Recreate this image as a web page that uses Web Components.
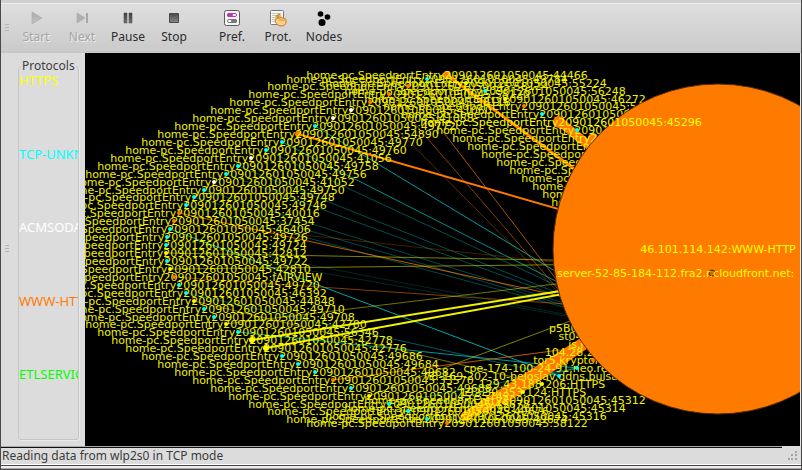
<!DOCTYPE html>
<html lang="en">
<head>
<meta charset="utf-8">
<title>Network monitor</title>
<style>
html, body { height: 100%; margin: 0; }
body { background: #dcdcdc; }
</style>
</head>
<body>
<monitor-window>
  <tool-bar slot="tools">
    <tool-button label="Start" disabled><svg width="18" height="18" viewBox="0 0 18 18"><defs><linearGradient id="a" x2="0" y2="1"><stop stop-color="#aaa"/><stop offset="1" stop-color="#c6c6c6"/></linearGradient></defs><path d="M5 3L15 9 5 15Z" fill="url(#a)" stroke="#a8a8a8" stroke-width=".6"/></svg></tool-button>
    <tool-button label="Next" disabled><svg width="18" height="18" viewBox="0 0 18 18"><path d="M4 4L12 9 4 14Z" fill="#b0b0b0" stroke="#a8a8a8" stroke-width=".6"/><path d="M13 4h2v10h-2z" fill="#a8a8a8"/></svg></tool-button>
    <tool-button label="Pause"><svg width="18" height="18" viewBox="0 0 18 18"><defs><linearGradient id="b" x2="0" y2="1"><stop stop-color="#3c3c3c"/><stop offset="1" stop-color="#777"/></linearGradient></defs><path d="M5 4h3v10H5zM10 4h3v10h-3z" fill="url(#b)" stroke="#444" stroke-width=".5"/></svg></tool-button>
    <tool-button label="Stop"><svg width="18" height="18" viewBox="0 0 18 18"><defs><linearGradient id="c" x2="0" y2="1"><stop stop-color="#4a4a4a"/><stop offset="1" stop-color="#888"/></linearGradient></defs><path d="M4.500 4.500h9v9h-9z" fill="url(#c)" stroke="#4a4a4a"/></svg></tool-button>
    <tool-button class="group" label="Pref."><svg width="18" height="18" viewBox="0 0 18 18"><rect x="1.500" y="1.500" width="15" height="15" rx="2" fill="#f3f3f3" stroke="#5c5c5c"/><rect x="4.500" y="4.500" width="9" height="3" rx="1.500" fill="#fff" stroke="#b53cab"/><rect x="4" y="4" width="6" height="4" rx="2" fill="#b53cab"/><rect x="4.500" y="10.500" width="9" height="3" rx="1.500" fill="#fff" stroke="#777"/><rect x="8" y="10" width="6" height="4" rx="2" fill="#777"/></svg></tool-button>
    <tool-button label="Prot."><svg width="18" height="18" viewBox="0 0 18 18"><rect x="1.500" y="1.500" width="13" height="14" rx="1" fill="#f6f6f6" stroke="#777"/><path d="M3 4.500h9M3 6.500h4M3 8.500h3M3 10.500h3M3 12.500h4" stroke="#c4c8ba"/><path d="M7 11V7.500c0-1.500 2-1.500 2 0V10 6c0-1.500 2-1.500 2 0v3c.5-1 2-.8 2 .3.700-.9 2-.5 2 .6.700-.7 2-.2 2 1V13c0 2.500-2 4-5 4-3 0-4-1.500-5.500-4C6 12 5.500 11 7 11Z" fill="#fbd08b" stroke="#c77b12"/><path d="M11 9v3M13 10v2M15 10.500V12" stroke="#c77b12" stroke-width=".8"/></svg></tool-button>
    <tool-button label="Nodes"><svg width="18" height="18" viewBox="0 0 18 18"><path d="M5 5l8 3-5 6" fill="none" stroke="#555" stroke-width=".7" stroke-dasharray="1 1"/><circle cx="5.500" cy="5" r="2.800"/><circle cx="12.500" cy="8" r="2.800"/><circle cx="7" cy="13.500" r="3.500"/></svg></tool-button>
  </tool-bar>
  <protocol-panel slot="side" heading="Protocols">
    <protocol-name style="color:#ff0">HTTPS</protocol-name>
    <protocol-name style="color:#0ff">TCP-UNKNOWN</protocol-name>
    <protocol-name style="color:#fff">ACMSODA</protocol-name>
    <protocol-name style="color:#ff7b00">WWW-HTTP</protocol-name>
    <protocol-name style="color:#0f0">ETLSERVICEMGR</protocol-name>
  </protocol-panel>
  <node-graph slot="main"></node-graph>
  <status-bar slot="status">Reading data from wlp2s0 in TCP mode</status-bar>
</monitor-window>

<script>
class Base extends HTMLElement {
  render(html) {
    this.attachShadow({ mode: 'open' }).innerHTML = html;
  }
}

customElements.define('monitor-window', class extends Base {
  connectedCallback() {
    this.render(`<style>
      :host { display: flex; flex-direction: column; box-sizing: border-box; min-height: 100vh;
        border: solid #4a4848; border-width: 0 1px 1px; background: #dcdcdc; color: #3c3c3c;
        font: 12px/18px "Noto Sans", "Open Sans", sans-serif; }
      .top { height: 3px; background: #cfcfcf; border-bottom: 1px solid #eee; }
      .body { flex: 1; display: flex; min-height: 0; }
      .base { height: 2px; border-top: 1px solid #4a4848; background: #eee; border-bottom: 1px solid #aaa; }
    </style>
    <div class="top"></div>
    <slot name="tools"></slot>
    <div class="body"><slot name="side"></slot><slot name="main"></slot></div>
    <slot name="status"></slot>
    <div class="base"></div>`);
  }
});

customElements.define('tool-bar', class extends Base {
  connectedCallback() {
    this.render(`<style>
      :host { display: flex; align-items: center; box-sizing: border-box; height: 49px;
        background: linear-gradient(#dedede, #cbcbcb); border-bottom: 2px solid #c7c7c7; }
      .grip { width: 4px; height: 7px; margin: 0 4px; background: repeating-linear-gradient(#b4b4b4 0 1px, transparent 1px 3px); }
      ::slotted(.group) { margin-left: 12px; }
    </style><div class="grip"></div><slot></slot>`);
  }
});

customElements.define('tool-button', class extends Base {
  connectedCallback() {
    const off = this.hasAttribute('disabled');
    this.render(`<style>
      :host { display: block; width: 46px; }
      button { display: flex; flex-direction: column; align-items: center; gap: 1px; width: 100%;
        padding: 0; border: 0; background: none; font: inherit; color: #2c2c2c; }
      button:disabled { color: #a6a6a6; text-shadow: 1px 1px #eee; }
    </style><button type="button"${off ? ' disabled' : ''}><slot></slot><span>${this.getAttribute('label')}</span></button>`);
  }
});

customElements.define('protocol-panel', class extends Base {
  connectedCallback() {
    this.render(`<style>
      :host { display: flex; align-items: stretch; flex: 0 0 84px; box-sizing: border-box; padding: 4px 6px 6px 0; }
      .grip { align-self: center; width: 4px; height: 7px; margin: 0 9px 0 4px; background: repeating-linear-gradient(#b4b4b4 0 1px, transparent 1px 3px); }
      fieldset { flex: 1; min-width: 0; margin: 0; padding: 0; border: 1px solid #c6c6c6; border-radius: 3px;
        box-shadow: 1px 1px #e9e9e9; }
      legend { margin-left: 2px; padding: 0 1px; line-height: 18px; }
      .rows { display: grid; grid-auto-rows: 1fr; height: calc(100% + 4px); margin-top: -4px; overflow: hidden; font-size: 13px; }
    </style><div class="grip"></div>
    <fieldset><legend>${this.getAttribute('heading')}</legend><div class="rows"><slot></slot></div></fieldset>`);
  }
});

customElements.define('protocol-name', class extends Base {
  connectedCallback() {
    this.render(`<style>:host { display: block; overflow: hidden; white-space: nowrap; }</style><slot></slot>`);
  }
});

customElements.define('status-bar', class extends Base {
  connectedCallback() {
    this.render(`<style>
      :host { display: flex; align-items: flex-end; justify-content: space-between; box-sizing: border-box; height: 19px;
        border-bottom: 1px solid #fff; }
      .text { flex: 1; border-top: 1px solid #aaa; box-shadow: inset 0 1px #111; padding-left: 1px; line-height: 17px; }
      svg { margin: 0 2px 2px 5px; }
    </style><div class="text"><slot></slot></div>
    <svg width="12" height="12"><path d="M8 1h2v2H8zM4 4h2v2H4zM8 4h2v2H8zM1 8h2v2H1zM4 8h2v2H4zM8 8h2v2H8z" fill="#a6a6a0"/></svg>`);
  }
});

const O = '#ff7b00', C = '#00ffff', Y = '#ffff00', W = '#ffffff';
const HOST = 'home-pc.SpeedportEntry209012601050045:';

/* x, y, colour, local port or full name, radius */
const nodes = [
  [447, 75, O, 44466, 4], [427, 79, C, 49784], [466, 83, Y, 55224], [408, 86, O, 58124], [485, 91, C, 56248],
  [389, 94, O, 58120], [505, 99, Y, 46272], [370, 102, O, 58118], [524, 106, O, 54622], [351, 110, W, 41060],
  [542, 114, C, 56252], [333, 118, W, 41058], [315, 126, C, 49772], [577, 130, C, 49790], [298, 134, O, 54890, 3],
  [593, 138, O, 45298, 5], [282, 142, C, 49770], [608, 146, C, 49762], [266, 150, C, 49760], [622, 154, C, 49764],
  [251, 158, W, 41056], [637, 162, C, 49766], [238, 166, C, 49758], [650, 170, C, 49768], [226, 174, C, 49756],
  [662, 178, C, 49774], [214, 182, W, 41052], [673, 186, C, 49776], [204, 190, C, 49750], [683, 194, C, 49778],
  [194, 197, C, 49748], [692, 202, C, 49780], [186, 205, C, 49746], [179, 213, O, 40016], [174, 221, O, 37454],
  [170, 229, C, 46406], [167, 237, C, 49726], [166, 245, C, 49724], [166, 253, Y, 42812], [167, 261, C, 49722],
  [170, 269, Y, 42810], [174, 277, O, 'home-pc.SpeedportEntry209012601050045:fAIRVIEW'], [179, 285, C, 49720],
  [186, 293, C, 46392], [194, 301, Y, 44848], [204, 309, C, 49710], [214, 317, C, 49708], [226, 324, Y, 42780],
  [238, 332, C, 56346], [252, 340, Y, 42778, 3], [266, 348, Y, 42776, 3], [282, 356, C, 49686], [298, 364, C, 49684],
  [315, 372, C, 49682], [333, 380, O, 33570], [351, 388, C, 49680], [369, 396, Y, 35742], [389, 404, C, 49678],
  [408, 411, C, 49676], [427, 419, C, 49674], [447, 423, O, 58122], [466, 416, O, 45316, 5], [485, 408, O, 45314, 5],
  [505, 400, O, 45312, 5], [523, 392, Y, '192.30.253.124:HTTPS'], [542, 384, Y, '129.43.188.206:HTTPS'],
  [559, 376, C, '78-169-202-10-beloslav.ddns.bulsats.com:HTTPS'], [577, 368, C, 'cpe-174-100-24-91.neo.res.rr.com:HTTPS'],
  [593, 360, O, 'tor5.kryptonights.info'], [608, 352, O, '104.28.204.210:HTTPS'],
  [622, 344, O, 'js.hotlog.net:HTTPS'], [637, 336, Y, 'st04.freesoftware.org:HTTPS'], [656, 328, Y, 'p5B0A2C41.dip0.t-ipconnect.de:HTTPS']
];

/* x1, y1, x2, y2, colour, width, opacity */
const links = [
  [315, 126, 656, 332, C, 1, .6], [282, 142, 656, 332, C, 1, .55], [266, 150, 656, 332, C, 1, .3], [238, 166, 656, 332, C, 1, .3],
  [226, 174, 656, 332, C, 1, .3], [204, 190, 656, 332, C, 1, .28], [194, 197, 656, 332, C, 1, .28], [186, 205, 656, 332, C, 1, .28],
  [167, 237, 656, 332, C, 1, .15], [166, 245, 656, 332, C, 1, .15], [170, 229, 559, 376, C, 1, .65],
  [179, 213, 712, 329, O, 1, .75], [174, 221, 712, 279, O, 1, .25], [174, 277, 712, 314, O, 1, .5],
  [298, 134, 718, 255, O, 2, 1], [447, 75, 718, 275, O, 3, 1],
  [370, 102, 576, 310, O, 1, .35], [389, 94, 576, 310, O, 1, .5], [408, 86, 576, 305, O, 1, .65],
  [166, 253, 712, 263, Y, 1, .5], [170, 269, 712, 263, Y, 1, .5], [226, 324, 712, 265, Y, 1, .45],
  [252, 340, 712, 267, Y, 2, .95], [266, 348, 712, 267, Y, 2, .95],
  [238, 332, 577, 368, C, 1, .6], [186, 293, 559, 376, C, 1, .35], [194, 301, 542, 384, Y, 1, .45],
  [369, 396, 656, 289, Y, 1, .5], [333, 380, 560, 350, O, 1, .75],
  [389, 404, 577, 368, C, 1, .4], [408, 411, 577, 368, C, 1, .4],
  [466, 416, 700, 268, O, 9, 1], [485, 408, 700, 268, O, 9, 1], [505, 400, 700, 268, O, 7, 1],
  [560, 122, 718, 249, O, 9, 1], [593, 138, 718, 249, O, 8, 1]
];

customElements.define('node-graph', class extends Base {
  connectedCallback() {
    const label = (x, y, t) => `<text x="${x}" y="${y + 4}">${t}</text>`;
    const dot = ([x, y, c, , r = 2]) => `<circle cx="${x}" cy="${y}" r="${r}" fill="${c}"/>`;
    this.render(`<style>
      :host { display: block; flex: 1; min-width: 0; position: relative; background: #000; border-right: 1px solid #e8e8e8; overflow: hidden; }
      svg { position: absolute; inset: 0; width: 100%; height: 100%; }
      text { font: 11px "DejaVu Sans", sans-serif; text-anchor: middle; fill: #ff0; }
    </style>
    <svg role="img" aria-label="Traffic graph"><g transform="translate(-85 -53)">
      ${links.map(([a, b, c, d, k, w, o]) => `<line x1="${a}" y1="${b}" x2="${c}" y2="${d}" stroke="${k}" stroke-width="${w}" opacity="${o}" stroke-linecap="round"/>`).join('')}
      ${nodes.filter(n => n[4]).map(dot).join('')}
      <g opacity=".94">${nodes.map(n => label(n[0], n[1], typeof n[3] === 'number' ? HOST + n[3] : n[3])).join('')}</g>
      ${nodes.filter(n => !n[4]).map(dot).join('')}
      <circle cx="559" cy="122" r="6" fill="${O}"/>
      <circle cx="718" cy="249" r="165" fill="${O}" stroke="#5a2c00" stroke-width="1"/>
      ${label(561, 122, HOST + 45296)}
      ${label(718, 249, '46.101.114.142:WWW-HTTP')}
      <circle cx="712" cy="273" r="3" fill="#d66a00" stroke="#4d2600"/>
      <text x="557" y="277" style="text-anchor:start">server-52-85-184-112.fra2.r.cloudfront.net:</text>
    </g></svg>`);
  }
});
</script>
</body>
</html>
